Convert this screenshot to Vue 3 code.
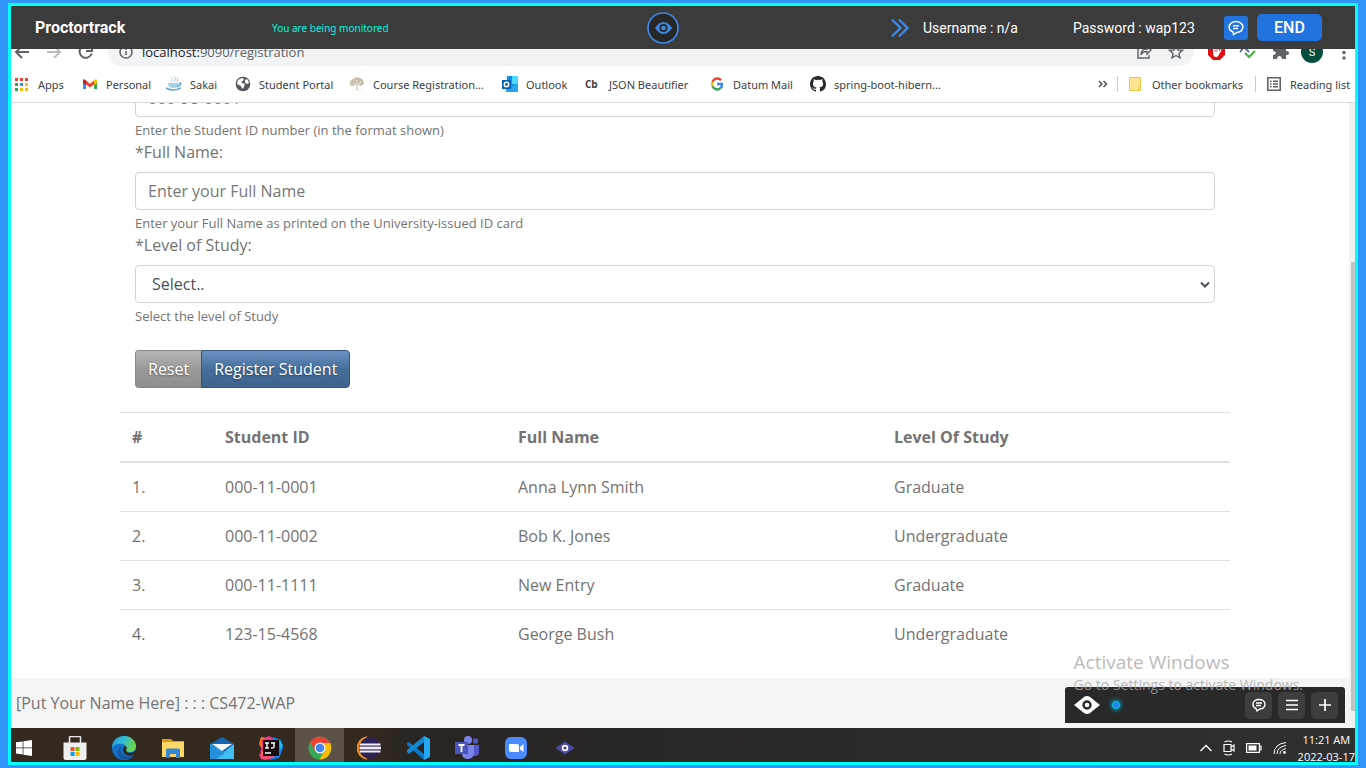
<script setup>
import { ref } from 'vue'

const studentId = ref('')
const fullName = ref('')
const level = ref('')

const students = [
  { id: '000-11-0001', name: 'Anna Lynn Smith', level: 'Graduate' },
  { id: '000-11-0002', name: 'Bob K. Jones', level: 'Undergraduate' },
  { id: '000-11-1111', name: 'New Entry', level: 'Graduate' },
  { id: '123-15-4568', name: 'George Bush', level: 'Undergraduate' },
]
</script>

<template>
  <div class="desktop">
    <div class="monitor">
      <header class="proctor">
        <strong class="brand">Proctortrack</strong>
        <span class="status">You are being monitored</span>
        <svg class="eye-logo" width="32" height="32" viewBox="0 0 32 32">
          <circle cx="16" cy="16" r="15" fill="#272727" stroke="#3f87e5" stroke-width="1.7" />
          <path d="M8 16Q12 10 16.500 10T25 16Q21 22 16.500 22T8 16Z" fill="#3f87e5" />
          <circle cx="16.500" cy="16" r="3.200" fill="#3f87e5" stroke="#272727" stroke-width="1.700" />
        </svg>
        <svg class="chevrons" width="18" height="20" viewBox="0 0 18 20" fill="none" stroke="#3f87e5" stroke-width="2.400">
          <path d="M1 1.500l8.500 8.500L1 18.500M8 1.500l8.500 8.500L8 18.500" />
        </svg>
        <span class="user">Username : n/a</span>
        <span class="pass">Password : wap123</span>
        <button class="chat" type="button" aria-label="Chat">
          <svg width="16" height="16" viewBox="0 0 16 16" fill="none" stroke="#fff" stroke-width="1.500">
            <path d="M5 11.800C2.500 11 1.200 9 1.200 7c0-3.200 3-5.400 6.800-5.400S14.800 3.800 14.800 7c0 3-2.600 5-6 5.400L5.500 14.600zM5 5.700h6M5 8.400h5" />
          </svg>
        </button>
        <button class="end" type="button">END</button>
      </header>

      <nav class="address">
        <svg class="nav-icons" width="84" height="28" viewBox="0 0 84 28" fill="none" stroke="#5f6368" stroke-width="2">
          <path d="M18 14H5m6-6l-6 6 6 6" />
          <path d="M36 14h13m-6-6l6 6-6 6" stroke="#babcbe" />
          <path d="M79.500 9.500a6.200 6.200 0 1 0 1.200 6M81 7v6h-6" />
        </svg>
        <div class="pill">
          <svg width="14" height="14" viewBox="0 0 14 14" fill="none" stroke="#5f6368" stroke-width="1.500">
            <circle cx="7" cy="7" r="6" /><path d="M7 6v4M7 3.500v1.500" />
          </svg>
          <span class="url"><b>localhost:</b>9090/registration</span>
          <svg width="16" height="16" viewBox="0 0 16 16" fill="none" stroke="#5f6368" stroke-width="1.400">
            <path d="M5 3H2v11h11v-3M5 11c0-4 2-6 6-6V2l4 4-4 4V7.500c-3 0-5 1-6 3.500z" />
          </svg>
          <svg class="star" width="16" height="16" viewBox="0 0 16 16" fill="none" stroke="#5f6368" stroke-width="1.400">
            <path d="M8 1.800l1.800 4.200 4.600.400-3.500 3 1.100 4.500L8 11.500l-4 2.400 1.100-4.500-3.500-3 4.600-.400z" />
          </svg>
        </div>
        <svg class="ext" width="161" height="28" viewBox="-1 0 161 28">
          <path d="M18 6h7l5 5v6l-5 5h-7l-5-5v-6z" fill="#e40d12" />
          <path d="M18 8h6v7q0 4-3 4t-3-4z" fill="#fff" />
          <path d="M24 13l2-2q1 0 0 2l-3 5z" fill="#fff" />
          <path d="M20 7v7M22 7v7" stroke="#e40d12" stroke-width=".7" />
          <path d="M45 14l4-5 5 5" fill="none" stroke="#4b6eaa" stroke-width="1.800" />
          <path d="M50 15l4 4 6-6" fill="none" stroke="#45ae3f" stroke-width="2" />
          <path d="M78 9h4q0-4 2.500-4T87 9h4v5q3 0 3 2t-3 2v4h-4q-.5-3-2.500-3T82 22h-4v-4q3-.5 3-2t-3-2z" fill="#5f6368" transform="translate(0 -1)" />
          <circle cx="117" cy="14" r="11" fill="#004d40" />
          <g fill="#5f6368"><circle cx="149" cy="9" r="1.700" /><circle cx="149" cy="14.500" r="1.700" /><circle cx="149" cy="20" r="1.700" /></g>
          <text x="117" y="18" text-anchor="middle" class="avatar">S</text>
        </svg>
      </nav>

      <nav class="bookmarks">
        <a href="#">
          <svg width="16" height="16" viewBox="0 0 16 16">
            <path d="M1 2h3v3H1zM6 2h3v3H6zM11 2h3v3h-3z" fill="#e94335" />
            <path d="M1 7h3v3H1z" fill="#34a353" /><path d="M6 7h3v3H6z" fill="#4285f4" /><path d="M11 7h3v3h-3z" fill="#fbbc05" />
            <path d="M1 12h3v3H1z" fill="#34a353" /><path d="M6 12h3v3H6zM11 12h3v3h-3z" fill="#fbbc05" />
          </svg>Apps</a>
        <a href="#">
          <svg width="16" height="16" viewBox="0 0 16 16">
            <path d="M1 5v8h3V7z" fill="#4285f4" /><path d="M12 7v6h3V5z" fill="#34a853" />
            <path d="M4 4.500l4 3.200 4-3.200V8.500l-4 3-4-3z" fill="#ea4335" />
            <path d="M12 4.500q3-2.700 3 .5v2l-3 2z" fill="#fbbc04" /><path d="M1 5q0-3.200 3-.5V9L1 7z" fill="#c5221f" />
          </svg>Personal</a>
        <a href="#">
          <svg width="16" height="16" viewBox="0 0 16 16" fill="none" stroke="#69a6d8">
            <path d="M4.500 1q3 2 1 5M8 0q3 3 0 6M11.500 2q1 2-1 4" stroke="#a9c9e2" />
            <path d="M2 7h11q0 5-5.500 5T2 7z" fill="#a6d0ed" stroke="none" /><path d="M13 7q3 0 1 2t-3 1M0 12q7 4 15 0" stroke-width="1.600" />
          </svg>Sakai</a>
        <a href="#">
          <svg width="16" height="16" viewBox="0 0 16 16"><circle cx="8" cy="8" r="7.300" fill="#54575b" /><path d="M3 4l4-2 2 1-1 2-2 1 1 1 3 1-1 3-2 2-1-3-4-2zM10 4l2-1 2 3-1 2-3-1z" fill="#fff" /></svg>Student Portal</a>
        <a href="#">
          <svg width="16" height="16" viewBox="0 0 16 16"><path d="M1 7q0-3 3-4 3-3 7-1 4 1 4 6l-3 2-3-1v5H7V9l-3 1-3-1z" fill="#c8c0ac" /><path d="M4 7l4 3 4-4M8 4v10M3 14h10" stroke="#eee9df" fill="none" /></svg>Course Registration...</a>
        <a href="#">
          <svg width="16" height="16" viewBox="0 0 16 16"><path d="M5 0h11v16H4z" fill="#1490df" /><path d="M10 0h6v8h-6z" fill="#50d9ff" /><path d="M4 15l12-8v9H4z" fill="#28a8ea" /><path d="M0 4h9v9H0z" fill="#0364b8" /><circle cx="4.500" cy="8.500" r="2.200" fill="none" stroke="#fff" stroke-width="1.500" /></svg>Outlook</a>
        <a href="#"><span class="cb">Cb</span>JSON Beautifier</a>
        <a href="#">
          <svg width="16" height="16" viewBox="0 0 16 16" fill="none" stroke-width="2.400"><path d="M12 4.200A5 5 0 0 0 3.500 6" stroke="#ea4335" /><path d="M3.500 6a5 5 0 0 0 0 4.300" stroke="#fbbc05" /><path d="M3.500 10.300a5 5 0 0 0 8 1.800" stroke="#34a853" /><path d="M11.500 12.100A5 5 0 0 0 13 8H8" stroke="#4285f4" /></svg>Datum Mail</a>
        <a href="#">
          <svg width="16" height="16" viewBox="0 0 16 16"><path fill="#24292e" fill-rule="evenodd" d="M8 0C3.580 0 0 3.580 0 8c0 3.540 2.290 6.530 5.470 7.590.4.070.55-.17.55-.38v-1.340c-2.220.48-2.690-1.070-2.690-1.070-.36-.92-.89-1.170-.89-1.170-.73-.5.050-.49.050-.49.810.060 1.230.83 1.230.83.710 1.210 1.870.86 2.330.66.070-.52.280-.86.510-1.060-1.780-.2-3.640-.89-3.640-3.950 0-.87.310-1.590.82-2.150-.08-.2-.36-1.020.08-2.120 0 0 .67-.21 2.200.82A7.700 7.700 0 0 1 8 3.870c.68 0 1.360.09 2 .27 1.530-1.040 2.200-.82 2.200-.82.44 1.100.16 1.920.08 2.120.51.56.82 1.270.82 2.150 0 3.070-1.870 3.750-3.650 3.950.29.25.54.73.54 1.480v2.190c0 .21.15.46.55.38A8 8 0 0 0 16 8c0-4.420-3.580-8-8-8z" /></svg>spring-boot-hibern...</a>
        <svg class="more" width="10" height="10" viewBox="0 0 10 10" fill="none" stroke="#55585c" stroke-width="1.600"><path d="M1 2l3 3-3 3M5.500 2l3 3-3 3" /></svg>
        <a class="sep" href="#">
          <svg width="12" height="16" viewBox="0 0 12 16"><path d="M.5 1.500h11v13H.5z" fill="#ffe591" stroke="#ecc54e" /><path d="M9.500 10.500h2v4h-2z" fill="#ffe591" stroke="#ecc54e" /></svg>Other bookmarks</a>
        <a class="sep reading" href="#">
          <svg width="14" height="14" viewBox="0 0 14 14" fill="none" stroke="#5f6368" stroke-width="1.600"><path d="M.8.8h12.400v12.400H.8zM3 4.200h1.500M6 4.200h5M3 7h1.500M6 7h5M3 9.800h1.500M6 9.800h5" /></svg>Reading list</a>
      </nav>

      <div class="viewport">
        <main class="page">
          <form class="form" @submit.prevent>
            <div class="field">
              <input id="sid" v-model="studentId" class="control" placeholder="000-98-0001" aria-label="Student ID" />
              <small>Enter the Student ID number (in the format shown)</small>
            </div>
            <div class="field">
              <label for="name">*Full Name:</label>
              <input id="name" v-model="fullName" class="control" placeholder="Enter your Full Name" />
              <small>Enter your Full Name as printed on the University-issued ID card</small>
            </div>
            <div class="field">
              <label for="level">*Level of Study:</label>
              <div class="select-wrap">
                <select id="level" v-model="level" class="control">
                  <option value="">Select..</option>
                  <option>Graduate</option>
                  <option>Undergraduate</option>
                </select>
                <svg width="10" height="8" viewBox="0 0 10 8" fill="none" stroke="#495057" stroke-width="2"><path d="M1 1.500l4 4 4-4" /></svg>
              </div>
              <small>Select the level of Study</small>
            </div>
            <div class="buttons">
              <button class="reset" type="reset">Reset</button><button class="register" type="submit">Register Student</button>
            </div>
          </form>

          <table>
            <colgroup><col class="c1" /><col class="c2" /><col class="c3" /><col /></colgroup>
            <thead>
              <tr><th>#</th><th>Student ID</th><th>Full Name</th><th>Level Of Study</th></tr>
            </thead>
            <tbody>
              <tr v-for="(s, i) in students" :key="s.id">
                <td>{{ i + 1 }}.</td><td>{{ s.id }}</td><td>{{ s.name }}</td><td>{{ s.level }}</td>
              </tr>
            </tbody>
          </table>
          <footer class="footer">[Put Your Name Here] : : : CS472-WAP</footer>
        </main>
        <div class="scrollbar"><div class="thumb"></div></div>

        <div class="widget">
          <svg width="26" height="20" viewBox="0 0 26 20"><path d="M0 10L10 2q3-2 6 0l10 8-10 8q-3 2-6 0z" fill="#fff" /><circle cx="13" cy="10" r="3.500" fill="#fff" stroke="#292929" stroke-width="2.400" /></svg>
          <span class="dot"></span>
          <button type="button" aria-label="Chat"><svg width="16" height="16" viewBox="0 0 16 16" fill="none" stroke="#fff" stroke-width="1.400"><path d="M5 11.500C3 10.800 2 9 2 7.200c0-2.700 2.500-4.700 6-4.700s6 2 6 4.700-2.300 4.500-5.200 4.800L6 14zM5 6h6M5 8.500h5" /></svg></button>
          <button type="button" aria-label="Menu"><svg width="16" height="16" viewBox="0 0 16 16" stroke="#fff" stroke-width="1.500"><path d="M2 3.500h12M2 8h12M2 12.500h12" /></svg></button>
          <button type="button" aria-label="Add"><svg width="16" height="16" viewBox="0 0 16 16" stroke="#fff" stroke-width="1.700"><path d="M2 8h12M8 2v12" /></svg></button>
        </div>
        <div class="activate">
          <div class="activate-title">Activate Windows</div>
          <div>Go to Settings to activate Windows.</div>
        </div>
      </div>

      <div class="taskbar">
        <button class="start" type="button" aria-label="Start"><svg width="16" height="16" viewBox="0 0 16 16" fill="#fff"><path d="M0 2.300l6.700-.9v6.200H0zM7.400 1.300L16 0v7.600H7.400zM0 8.300h6.700v6.200L0 13.600zM7.400 8.300H16V16l-8.600-1.300z" /></svg></button>
        <button type="button" aria-label="Store"><svg width="24" height="24" viewBox="0 0 24 24"><path d="M6.500 7V1.500q0-1 1-1h9q1 0 1 1V7" fill="none" stroke="#e9e9e9" stroke-width="1.500" /><path d="M.5 6.500h23V22q0 2-2 2h-19q-2 0-2-2z" fill="#efefef" /><path d="M7.500 11h4v4h-4z" fill="#f25022" /><path d="M12.500 11h4v4h-4z" fill="#7fba00" /><path d="M7.500 16h4v4h-4z" fill="#00a4ef" /><path d="M12.500 16h4v4h-4z" fill="#ffb900" /></svg></button>
        <button type="button" aria-label="Edge"><svg width="24" height="24" viewBox="0 0 24 24"><defs><linearGradient id="eg" x1="0" y1="0" x2="1" y2=".3"><stop offset="0" stop-color="#2298df" /><stop offset=".5" stop-color="#32bed5" /><stop offset="1" stop-color="#68d64c" /></linearGradient></defs><circle cx="12" cy="12" r="12" fill="#1473c9" /><path d="M0 12C0 4 6 0 12 0c7 0 12 5 12 10 0 4-3 6-6 6-3 0-5-1-4-3 1-5-4-6-7-5-4 0-6 2-7 4z" fill="url(#eg)" /><path d="M10 10c-3 4-1 9 4 10 3 1 6 0 8-1-3 5-10 6-14 3-4-4-3-10 2-12z" fill="#1559a4" /><path d="M14 10c2 3-1 4 1 6 2 2 6 1 9-2 0 2-1 4-2 5-5 2-11 0-11-5 0-2 1-4 3-4z" fill="#30281e" /></svg></button>
        <button type="button" aria-label="Files"><svg width="24" height="24" viewBox="0 0 24 24"><path d="M1 3h9l2 2h11v5H1z" fill="#dc9b13" /><path d="M1 6h22v15H1z" fill="#ffd667" /><path d="M5 22v-8q0-1.500 1.500-1.500h11q1.500 0 1.500 1.500v8h-4v-4H9v4z" fill="#3189d3" /></svg></button>
        <button type="button" aria-label="Mail"><svg width="24" height="24" viewBox="0 0 24 24"><path d="M0 8l12-7 12 7v8H0z" fill="#1466ae" /><path d="M0 8l14 8L24 8v15H0z" fill="#42bdf0" /><path d="M0 8l15 9L6 23H0z" fill="#2491dd" /><path d="M2 8h20l-10 7z" fill="#f6f6f6" /></svg></button>
        <button type="button" aria-label="IntelliJ"><svg width="24" height="24" viewBox="0 0 24 24"><path d="M2 1l7 1 2 12-10 7 2-8-3-5z" fill="#fc801d" /><path d="M2 4l8-4 7 4-8 7-8 6 2-7z" fill="#fe3488" /><path d="M14 1l8 3 2 8-4 10-10 2z" fill="#0987f7" /><path d="M0 18l9-2 7 5-9 3-5-1z" fill="#fb4978" /><path d="M20 4l4 5-3 5z" fill="#1fbdf2" /><path d="M4 4h16v16H4z" fill="#160b0e" /><path d="M6 7h4M8 7v5M6 12h4M12 7h4M15 7v4q0 1-3 1M6 17h6" fill="none" stroke="#fff" stroke-width="1.400" /></svg></button>
        <button class="active" type="button" aria-label="Chrome"><svg width="24" height="24" viewBox="0 0 24 24"><circle cx="12" cy="12" r="11.500" fill="#34a853" /><path d="M2 6Q6 .5 12 .5T22.500 7H12l-5 8z" fill="#ea4335" /><path d="M12 7h10.500c2.500 8-2 16.500-11 16.500l5-9z" fill="#fbbc05" /><circle cx="12" cy="12" r="5.500" fill="#f4f4f4" /><circle cx="12" cy="12" r="4.300" fill="#4285f4" /></svg></button>
        <button type="button" aria-label="Eclipse"><svg width="24" height="24" viewBox="0 0 24 24"><path d="M10 1C-3 2-3 22 10 23-1 18-1 6 10 1z" fill="#f7941e" stroke="#f7941e" /><circle cx="13" cy="12" r="10.700" fill="#2c2255" /><path d="M3 8.500h20.500M2.500 12h21.500M3 15.500h20.500" stroke="#f3f0f8" stroke-width="2.200" /><path d="M2.500 10.200h21M2.500 13.800h21" stroke="#9188ad" stroke-width="1.300" /></svg></button>
        <button type="button" aria-label="VS Code"><svg width="24" height="24" viewBox="0 0 24 24"><path d="M1 7l2-1 15 12v6L1 9z" fill="#0879c3" /><path d="M1 16l2 2L18 6V0L1 14z" fill="#1688cf" /><path d="M18 0l6 3v18l-6 3z" fill="#25a9f2" /></svg></button>
        <button type="button" aria-label="Teams"><svg width="24" height="24" viewBox="0 0 24 24"><circle cx="13" cy="4" r="4" fill="#7b83eb" /><circle cx="20.500" cy="5" r="2.700" fill="#5059c9" /><path d="M16 9h8v7q0 4-4 4h-3z" fill="#5059c9" /><path d="M8 9h11v7q0 7-6 7t-6-6z" fill="#7b83eb" /><path d="M0 6h13v12H0z" fill="#4b53bc" /><path d="M3.500 9h6M6.500 9v7" stroke="#fff" stroke-width="1.800" /></svg></button>
        <button type="button" aria-label="Zoom"><svg width="24" height="24" viewBox="0 0 24 24"><rect x="1" y="1" width="22" height="22" rx="6" fill="#4a8cff" /><path d="M5 8h8q2 0 2 2v6H7q-2 0-2-2zM16 11l3.500-3v8L16 13.500z" fill="#fff" /></svg></button>
        <button type="button" aria-label="Proctor"><svg width="24" height="24" viewBox="0 0 24 24"><path d="M2.500 12L12 5.500l9.500 6.500-9.500 6.500z" fill="#4a4ba6" /><circle cx="12" cy="12" r="2.400" fill="#3d3f8f" stroke="#fff" stroke-width="1.700" /></svg></button>
        <div class="tray">
          <svg width="12" height="8" viewBox="0 0 12 8" fill="none" stroke="#fff" stroke-width="1.300"><path d="M.5 7L6 1.500 11.500 7" /></svg>
          <svg width="12" height="16" viewBox="0 0 12 16" fill="none" stroke="#fff" stroke-width="1.200"><path d="M1 4.500h7v7H1zM8 7l3-2v6L8 9M1.500 2Q5 0 9 2M1.500 14Q5 16 9 14" /></svg>
          <svg width="16" height="10" viewBox="0 0 16 10"><path d="M.6.600h12.800v8.800H.6zM13.500 3H15v4h-1.500" fill="none" stroke="#fff" stroke-width="1.200" /><path d="M2.500 2.500h8v5h-8z" fill="#fff" /></svg>
          <svg width="14" height="14" viewBox="0 0 14 14" fill="none" stroke="#fff"><path d="M1 13Q1 3 13 1.500M4 13q0-7 9-8.500M7 13q0-4 6-5.500" /><circle cx="11.500" cy="11.500" r="1.400" fill="#fff" stroke="none" /></svg>
          <div class="clock"><span>11:21 AM</span><span>2022-03-17</span></div>
        </div>
      </div>
    </div>
  </div>
</template>

<style>
body { margin: 0; }
</style>

<style scoped>
* { box-sizing: border-box; }
svg { flex: none; display: block; }
button { font: inherit; cursor: pointer; }
.desktop {
  height: 100vh;
  padding: 3px 8px;
  background: #3094f8;
  font-family: "Open Sans", "Noto Sans", sans-serif;
}
.monitor {
  height: 100%;
  border: 3px solid #00fff6;
  background: #fff;
  display: flex;
  flex-direction: column;
  overflow: hidden;
}
.proctor {
  flex: none;
  height: 43px;
  padding: 0 33px 0 24px;
  display: flex;
  align-items: center;
  background: #3b3b3b;
  color: #fff;
  font: 14px Roboto, sans-serif;
  white-space: nowrap;
}
.brand { width: 237px; font-size: 16px; font-weight: 700; }
.status { width: 375px; font: 10px "Noto Sans", sans-serif; color: #00f5e0; }
.chevrons { margin-left: auto; margin-right: 14px; }
.user { width: 150px; }
.pass { width: 151px; }
.chat {
  width: 24px;
  height: 24px;
  padding: 0;
  border: 0;
  border-radius: 3px;
  background: #2173df;
  display: grid;
  place-items: center;
}
.end {
  width: 65px;
  height: 27px;
  margin-left: 9px;
  padding: 0;
  border: 0;
  border-radius: 5px;
  background: #2173df;
  color: #fff;
  font-size: 16px;
  font-weight: 500;
}
.address {
  flex: none;
  height: 17px;
  display: flex;
  align-items: flex-end;
  overflow: hidden;
}
.pill {
  flex: 1;
  height: 28px;
  margin-left: 13px;
  padding: 0 10px 0 11px;
  border-radius: 14px;
  background: #f1f3f4;
  display: flex;
  align-items: center;
}
.url { flex: 1; margin-left: 9px; font-size: 13px; color: #5f6368; }
.url b { font-weight: 400; color: #202124; }
.star { margin-left: 16px; }
.avatar { font: 11px Roboto, sans-serif; fill: #fff; }
.bookmarks {
  flex: none;
  height: 37px;
  padding: 0 4px 0 3px;
  display: grid;
  grid-template-columns: 68px 84px 69px 114px 153px 83px 124px 101px 150px 1fr 138px 96px;
  align-items: center;
  border-bottom: 1px solid #d7d9db;
  font-family: "Noto Sans", sans-serif;
  font-size: 11px;
  white-space: nowrap;
}
.bookmarks a {
  display: flex;
  align-items: center;
  gap: 8px;
  color: #3c4043;
  text-decoration: none;
}
.more { justify-self: end; margin-right: 9px; }
.bookmarks .sep { height: 16px; padding-left: 11px; gap: 11px; border-left: 1px solid #c8cacc; }
.bookmarks .reading { gap: 9px; }
.cb { width: 16px; font: 700 10px "Open Sans", sans-serif; }
.viewport { position: relative; flex: 1; min-height: 0; display: flex; overflow: hidden; }
.page {
  flex: 1;
  display: flex;
  flex-direction: column;
  justify-content: flex-end;
  color: #737373;
  font-size: 16px;
  line-height: 24px;
}
.form { margin: 0 134px 24px 124px; }
.field { display: flex; flex-direction: column; }
.field label { margin-bottom: 8px; }
.field small { margin-top: 4px; font-size: 13px; line-height: 19px; }
.control {
  width: 100%;
  height: 38px;
  padding: 6px 12px;
  border: 1px solid #ced4da;
  border-radius: 4px;
  background: #fff;
  color: #495057;
  font: 16px/24px "Open Sans", sans-serif;
}
.control::placeholder { color: #777; opacity: 1; }
.select-wrap { position: relative; }
.select-wrap select { appearance: none; padding-left: 16px; }
.select-wrap svg { position: absolute; right: 5px; top: 16px; pointer-events: none; }
.buttons { display: flex; margin-top: 24px; }
.buttons button {
  height: 38px;
  padding: 0 12px;
  color: #fff;
  font-size: 16px;
  text-shadow: 0 1px 2px #0006;
}
.reset {
  border: 1px solid #868686;
  border-right: 0;
  border-radius: 4px 0 0 4px;
  background: linear-gradient(#b7b7b7, #999 50%, #8f8f8f);
}
.register {
  border: 1px solid #34557d;
  border-radius: 0 4px 4px 0;
  background: linear-gradient(#6b92c2, #446e9b 50%, #3e648d);
}
table {
  width: auto;
  margin: 0 119px 20px 109px;
  border-collapse: collapse;
  table-layout: fixed;
}
.c1 { width: 93px; }
.c2 { width: 293px; }
.c3 { width: 376px; }
th, td { height: 49px; padding: 0 12px; border-top: 1px solid #dee2e6; text-align: left; }
th { height: 50px; border-bottom: 2px solid #dee2e6; }
.footer { height: 50px; padding: 13px 5px; background: #f4f4f4; }
.scrollbar { width: 6px; background: #f1f1f1; padding: 159px 0 17px 2px; }
.thumb { height: 100%; background: #c1c1c1; }
.widget {
  position: absolute;
  right: 10px;
  bottom: 5px;
  width: 280px;
  height: 36px;
  padding: 0 7px 0 9px;
  display: flex;
  align-items: center;
  gap: 6px;
  border-radius: 3px 3px 0 0;
  background: #292929;
}
.dot {
  width: 8px;
  height: 8px;
  margin: 0 auto 0 6px;
  border: 1px solid #00c4e0;
  border-radius: 50%;
  background: #2680ef;
  box-shadow: 0 0 4px 1px #00a8bd;
}
.widget button {
  width: 27px;
  height: 27px;
  padding: 0;
  border: 0;
  border-radius: 5px;
  background: #3d3d3d;
  display: grid;
  place-items: center;
}
.activate {
  position: absolute;
  right: 52px;
  bottom: 33px;
  color: #a8a8a8cc;
  font-size: 14px;
  line-height: 20px;
  white-space: nowrap;
  pointer-events: none;
}
.activate-title { font-size: 19px; line-height: 26px; }
.taskbar {
  flex: none;
  height: 34px;
  display: flex;
  overflow: hidden;
  background: linear-gradient(90deg, #352a20, #33291f 27%, #282523 30%, #2b2b2b 70%, #303030);
}
.taskbar button {
  width: 49px;
  height: 40px;
  padding: 0;
  border: 0;
  background: none;
  display: grid;
  place-items: center;
}
.taskbar .start { width: 39px; padding-right: 13px; }
.taskbar .active { background: #5b5147; }
.tray { margin-left: auto; display: flex; align-items: center; gap: 11px; height: 40px; color: #fff; }
.clock { display: flex; flex-direction: column; align-items: center; font-size: 11px; line-height: 17px; }
</style>
